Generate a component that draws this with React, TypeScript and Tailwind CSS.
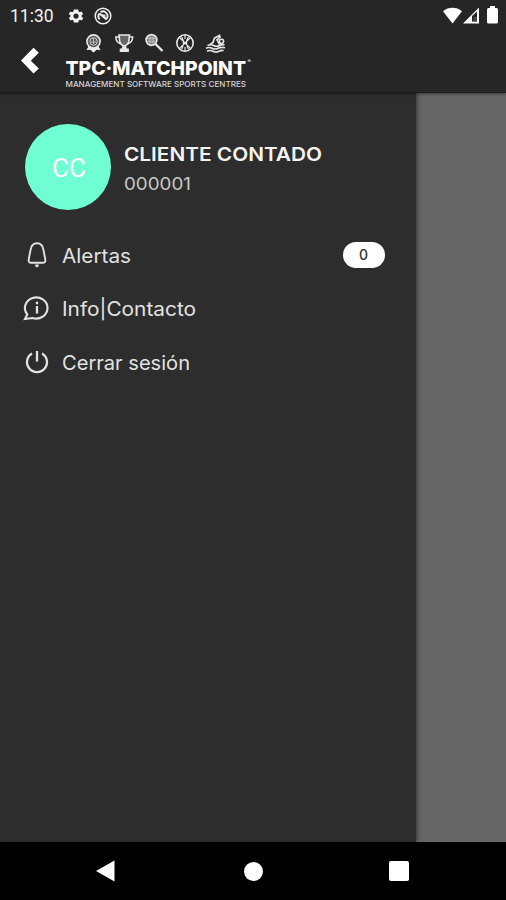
import type { ReactNode } from "react";

function StatusBar() {
  return (
    <div className="flex h-8 items-center pl-[10px] pr-2">
      <span className="w-[45px] whitespace-nowrap font-['Roboto'] text-[17.5px] leading-8 text-[#f2f2f2]">11:30</span>
      <svg className="ml-[12px] size-[18px]" viewBox="0 0 24 24" fill="#f5f5f5">
        <path
          fillRule="evenodd"
          d="M19.400 13c.1-.7.1-1.300 0-2l2.100-1.600-2-3.500-2.500 1c-.5-.4-1.100-.7-1.700-1L15 3.200h-6l-.4 2.700c-.6.3-1.100.6-1.700 1l-2.500-1-2 3.500L4.600 11c-.1.700-.1 1.300 0 2l-2.100 1.600 2 3.500 2.500-1c.5.4 1.100.7 1.700 1l.4 2.700h6l.4-2.700c.6-.3 1.100-.6 1.700-1l2.500 1 2-3.500zM12 15.500a3.500 3.500 0 1 1 0-7 3.500 3.500 0 0 1 0 7z"
        />
      </svg>
      <svg className="ml-[9px] size-[18px]" viewBox="0 0 18 18" fill="none" stroke="#f0f0f0">
        <circle cx="9" cy="9" r="7.800" strokeWidth="1.500" />
        <path d="M5.800 12.300A4.600 4.600 0 0 1 5.500 6.200M6.500 5.100a4.600 4.600 0 0 1 5.500 7.300M5.500 6.500l7 6" strokeWidth="1.800" />
        <path d="M7.500 7.200l3.800.6.200 3.700z" fill="#f0f0f0" stroke="none" />
      </svg>
      <div className="ml-auto flex items-center pb-[2px]">
        <svg className="h-[17px] w-[19px]" viewBox="0 0 19 17" fill="white">
          <path d="M0 4.200C5.500-.3 13.500-.3 19 4.200L9.500 16.500z" />
        </svg>
        <svg className="ml-[1px] h-[17px] w-4" viewBox="0 0 16 17" fill="white">
          <path fillRule="evenodd" d="M0 16.500L16 .5v16zM9 9v5.500h5V4.500z" />
          <path d="M10.500 10h3.500v4.500h-3.500z" fill="#484848" />
        </svg>
        <svg className="ml-[8px] h-[18px] w-[11px]" viewBox="0 0 11 18" fill="white">
          <path d="M3 0h5v2h1.500Q11 2 11 3.500v12.500q0 1.500-1.500 1.500h-8Q0 17.500 0 16V3.500Q0 2 1.500 2H3z" />
        </svg>
      </div>
    </div>
  );
}

function Logo() {
  return (
    <svg className="ml-[25px] h-[60px] w-[190px] overflow-visible" viewBox="64 32 190 60" fill="none" stroke="#e8e8e8">
      {/* rosette */}
      <path d="M89 45.500l-2.500 4.500 3.800-.2 3.200 2.700 3.200-2.700 3.800.2-2.500-4.500z" fill="#f0f0f0" stroke="none" />
      <circle cx="93.500" cy="41.500" r="6.600" fill="#5c5c5c" strokeWidth="1.600" />
      <circle cx="93.500" cy="41.500" r="3.700" stroke="#c8c8c8" strokeWidth="1" />
      <path d="M90.500 42h6M93.500 38v6" stroke="#c8c8c8" strokeWidth=".8" />
      {/* trophy */}
      <path d="M119 35h10.500l-.8 7q-1 3-4.400 4.200-3.500-1.200-4.500-4.200z" fill="#666" strokeWidth="1.600" />
      <path d="M119 37h-3.200q.2 5.500 5.200 7M129.500 37h3.200q-.2 5.500-5.200 7" strokeWidth="1.500" />
      <path d="M122.700 45.500h3.200l1 3h2v3.500h-9.200v-3.500h2z" fill="#e8e8e8" stroke="none" />
      {/* racket */}
      <circle cx="151.500" cy="40" r="5.400" fill="#8a8a8a" strokeWidth="1.600" />
      <path d="M148 38.500h7M148 41.500h7M150 36.500v7M153 36.500v7" stroke="#ccc" strokeWidth=".7" />
      <path d="M155.500 44l7 7" strokeWidth="2.300" />
      {/* basketball */}
      <circle cx="185" cy="43" r="8.200" strokeWidth="1.600" />
      <path d="M179.500 37.500l11 11M190.500 37.500l-11 11M181.500 36.500q4 6.500 0 13M188.500 36.500q-4 6.500 0 13M185 35v4M185 47v4" strokeWidth="1.200" />
      {/* swimmer */}
      <path d="M210 44.500l3-2 1.500-4.500 5-2.500.5 1.500-3 3 3 5" strokeWidth="1.700" />
      <circle cx="221.500" cy="41.300" r="2.100" strokeWidth="1.500" />
      <path d="M207.500 45.500q3-1.500 6 0t6 0 5-.5M206 48.300q3-1.500 6 0t6 0 7-.5M207 51.300q3-1.500 6 0t6 0 4.500-.5" strokeWidth="1.600" />
      <g stroke="none" fill="white">
        <text x="65.500" y="74.500" textLength="180.500" lengthAdjust="spacingAndGlyphs" className="font-['Inter'] text-[19px] font-extrabold">
          TPC·MATCHPOINT
        </text>
        <text x="247.500" y="62.500" className="font-['Inter'] text-[5px]">®</text>
        <text x="65.500" y="87" fill="#d4d4d4" textLength="180.500" lengthAdjust="spacingAndGlyphs" className="font-['Inter'] text-[8px] font-medium">
          MANAGEMENT SOFTWARE SPORTS CENTRES
        </text>
      </g>
    </svg>
  );
}

function Label({ children, width, className = "" }: { children: string; width: number; className?: string }) {
  return (
    <svg className="h-7 overflow-visible" width={width} fill="currentColor">
      <text x="0" y="21.500" textLength={width} lengthAdjust="spacingAndGlyphs" className={`font-['Inter'] ${className}`}>
        {children}
      </text>
    </svg>
  );
}

function MenuItem({ icon, label, width, children }: { icon: ReactNode; label: string; width: number; children?: ReactNode }) {
  return (
    <div className="flex h-[53.500px] items-center pl-[23px] pr-[31px] text-[#e2e2e2]">
      <svg className="mr-[11px] size-7" viewBox="0 0 28 28" fill="none" stroke="currentColor" strokeWidth="1.900">
        {icon}
      </svg>
      <Label width={width} className="text-[19.500px]">{label}</Label>
      {children}
    </div>
  );
}

export default function App() {
  return (
    <main className="flex h-[900px] w-[506px] flex-col overflow-hidden bg-[#666666]">
      <header className="relative z-10 h-[93px] border-b border-[#1d1d1d] bg-[#262626] shadow-[0_1px_3px_rgba(0,0,0,0.45)]">
        <StatusBar />
        <div className="flex">
          <svg className="ml-[21px] mt-[15px] h-[28px] w-[18px]" viewBox="0 0 18 28">
            <path d="M0 13.500L12.500.8l5.300 5-8 7.900 8 7.700-5.300 5.100z" fill="white" />
          </svg>
          <Logo />
        </div>
      </header>
      <div className="flex flex-1">
        <aside className="w-[415.5px] bg-[#2d2d2d] shadow-[1px_0_4px_rgba(0,0,0,0.5)]">
          <div className="flex items-center pl-[25px] pt-[31px]">
            <div className="flex size-[86px] items-center justify-center rounded-full bg-[#70ffd3] pl-[2px] pt-[2px] font-['Roboto'] text-[26px] text-white">
              CC
            </div>
            <div className="ml-[12.5px] flex flex-col">
              <div className="h-7 text-[#f4f4f4]">
                <Label width={198} className="text-[19px] font-semibold">CLIENTE CONTADO</Label>
              </div>
              <div className="h-7 pt-px text-[#c8c8c8]">
                <Label width={67} className="text-[17.500px]">000001</Label>
              </div>
            </div>
          </div>
          <nav className="mt-[18px]">
            <MenuItem
              label="Alertas"
              width={69}
              icon={
                <>
                  <path d="M7.500 9Q8.500 2.300 14 2.300T20.500 9l1.800 9.500q.5 3.300-2.500 3.300H8.200q-3 0-2.500-3.300z" />
                  <path d="M12 23.500h4q-.3 2.800-2 2.800t-2-2.800z" fill="currentColor" stroke="none" />
                </>
              }
            >
              <span className="ml-auto flex h-[26px] w-[42px] items-center justify-center rounded-full bg-white font-['Inter'] text-[14px] font-medium text-[#333]">
                0
              </span>
            </MenuItem>
            <MenuItem
              label="Info|Contacto"
              width={134}
              icon={
                <>
                  <path d="M2 25l2.300-4.500A11.300 10.600 0 1 1 9.500 24z" strokeWidth="2.100" />
                  <path d="M14 12v7.500M14 7.800v2.400" strokeWidth="2.300" />
                </>
              }
            />
            <MenuItem
              label="Cerrar sesión"
              width={128}
              icon={
                <>
                  <path d="M9 5.500a10 10 0 1 0 10 0" strokeWidth="2.300" />
                  <path d="M14 3v10.500" strokeWidth="2.300" />
                </>
              }
            />
          </nav>
        </aside>
      </div>
      <footer className="relative z-10 flex h-[58px] items-center bg-black">
        <svg className="ml-[96px] h-[22px] w-[19px]" viewBox="0 0 19 22" fill="white">
          <path d="M0 11L18.500.5v21z" />
        </svg>
        <span className="ml-[129px] size-[19px] rounded-full bg-white" />
        <span className="ml-[126px] size-5 rounded-[2px] bg-white" />
      </footer>
    </main>
  );
}
